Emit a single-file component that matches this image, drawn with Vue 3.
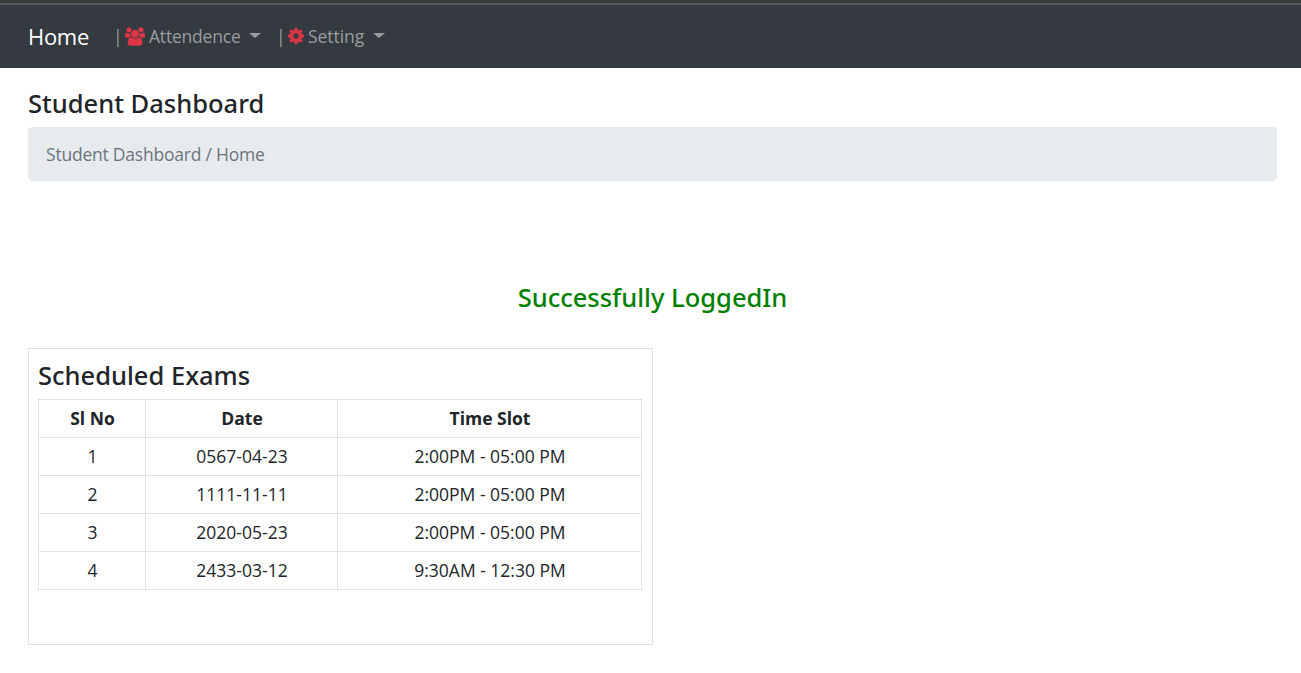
<script setup>
const exams = [
  { date: '0567-04-23', slot: '2:00PM - 05:00 PM' },
  { date: '1111-11-11', slot: '2:00PM - 05:00 PM' },
  { date: '2020-05-23', slot: '2:00PM - 05:00 PM' },
  { date: '2433-03-12', slot: '9:30AM - 12:30 PM' }
]
</script>

<template>
  <div class="page">
    <nav class="navbar">
      <a class="brand">Home</a>
      <a class="item attendance">
        <span class="pipe">|</span>
        <svg class="users" viewBox="0 0 1920 1792"><path d="M593 896q-162 5-265 128h-134q-82 0-138-40.500t-56-118.500q0-353 124-353 6 0 43.500 21t97.500 42.500 119 21.500q67 0 133-23-5 37-5 66 0 139 81 256zM1664 1533q0 120-73 189.500t-194 69.500h-874q-121 0-194-69.500t-73-189.500q0-53 3.500-103.500t14-109 26.500-108.500 43-97.500 62-81 85.500-53.500 111.500-20q10 0 43 21.500t73 48 107 48 135 21.500 135-21.500 107-48 73-48 43-21.500q61 0 111.500 20t85.500 53.500 62 81 43 97.500 26.500 108.500 14 109 3.500 103.500zM640 256q0 106-75 181t-181 75-181-75-75-181 75-181 181-75 181 75 75 181zM1344 640q0 159-112.500 271.500t-271.500 112.500-271.500-112.500-112.500-271.500 112.500-271.500 271.500-112.500 271.500 112.500 112.500 271.500zM1920 865q0 78-56 118.500t-138 40.500h-134q-103-123-265-128 81-117 81-256 0-29-5-66 66 23 133 23 59 0 119-21.500t97.500-42.500 43.500-21q124 0 124 353zM1792 256q0 106-75 181t-181 75-181-75-75-181 75-181 181-75 181 75 75 181z" /></svg>
        <span class="label">Attendence</span>
        <i class="caret"></i>
      </a>
      <a class="item setting">
        <span class="pipe">|</span>
        <svg class="cog" viewBox="128 128 1536 1536"><path d="M1152 896q0-106-75-181t-181-75-181 75-75 181 75 181 181 75 181-75 75-181zm512-109v222q0 12-8 23t-20 13l-185 28q-19 54-39 91 35 50 107 138 10 12 10 25t-9 23q-27 37-99 108t-94 71q-12 0-26-9l-138-108q-44 23-91 38-16 136-29 186-7 28-36 28h-222q-14 0-24.500-8.500t-11.500-21.500l-28-184q-49-16-90-37l-141 107q-10 9-25 9-14 0-25-11-126-114-165-168-7-10-7-23 0-12 8-23 15-21 51-66.500t54-70.500q-27-50-41-99l-183-27q-13-2-21-12.500t-8-23.500v-222q0-12 8-23t19-13l186-28q14-46 39-92-40-57-107-138-10-12-10-24 0-10 9-23 26-36 98.500-107.500t94.500-71.500q13 0 26 10l138 107q44-23 91-38 16-136 29-186 7-28 36-28h222q14 0 24.500 8.500t11.500 21.500l28 184q49 16 90 37l142-107q9-9 24-9 13 0 25 10 129 119 165 170 7 8 7 22 0 12-8 23-15 21-51 66.500t-54 70.500q26 50 41 98l183 28q13 2 21 12.500t8 23.500z" /></svg>
        <span class="label">Setting</span>
        <i class="caret"></i>
      </a>
    </nav>
    <main class="content">
      <h4 class="title">Student Dashboard</h4>
      <div class="breadcrumb">Student Dashboard / Home</div>
      <h4 class="message">Successfully LoggedIn</h4>
      <section class="card">
        <h4 class="card-title">Scheduled Exams</h4>
        <table>
          <colgroup><col class="c-no" /><col class="c-date" /><col /></colgroup>
          <thead>
            <tr><th>Sl No</th><th>Date</th><th>Time Slot</th></tr>
          </thead>
          <tbody>
            <tr v-for="(exam, i) in exams" :key="i">
              <td>{{ i + 1 }}</td>
              <td class="date">{{ exam.date }}</td>
              <td class="slot">{{ exam.slot }}</td>
            </tr>
          </tbody>
        </table>
      </section>
    </main>
  </div>
</template>

<style>
body { background: #fff; overflow: hidden; }
</style>

<style scoped>
* { box-sizing: border-box; }
.page {
  height: 673px;
  overflow: hidden;
  color: #212529;
  font: 400 17.5px/27px "Open Sans", "Noto Sans", sans-serif;
  white-space: nowrap;
}
.navbar {
  height: 68px;
  display: flex;
  align-items: center;
  padding: 1px 28px 0;
  border-top: 3px solid #3b3b3b;
  background: linear-gradient(#5a5a59 0 2px, #343a40 2px);
  color: #999c9f;
}
.brand { width: 87px; color: #fff; font-size: 22px; letter-spacing: -0.3px; }
.item { display: flex; align-items: center; height: 27px; }
.attendance { width: 163px; }
.pipe { width: 10px; flex: none; text-indent: -2px; }
.label { letter-spacing: -0.2px; padding-top: 1px; }
svg { flex: none; fill: #dc3545; margin-right: 4px; }
.users { width: 20px; height: 19px; }
.cog { width: 16px; height: 16px; }
.caret {
  margin: 0 0 2px 8px;
  border: 6px solid transparent;
  border-top: 5px solid #999c9f;
  border-bottom: 0;
}
.setting .label { letter-spacing: -0.05px; }
.setting .caret { margin-left: 9px; }
.content { padding: 19px 24px 0 28px; }
h4 { margin: 0; font: 500 25.5px/32px "Noto Sans", sans-serif; }
.breadcrumb {
  height: 54px;
  margin-top: 8px;
  padding: 13.5px 18px;
  border-radius: 4.5px;
  background: #e7ebee;
  color: #6c757d;
  letter-spacing: -0.22px;
}
.message { margin-top: 100px; text-align: center; color: #008000; }
.card {
  width: 625px;
  height: 297px;
  margin-top: 35px;
  padding: 10px 10px 0 9px;
  border: 1px solid #dee2e6;
}
.card-title { margin-bottom: 8px; }
table { width: 604px; table-layout: fixed; border-collapse: collapse; text-align: center; }
.c-no { width: 107px; }
.c-date { width: 192px; }
th, td { height: 38px; padding: 0 0 0 1px; border: 1px solid #dee2e6; }
th { font-weight: 700; }
</style>
